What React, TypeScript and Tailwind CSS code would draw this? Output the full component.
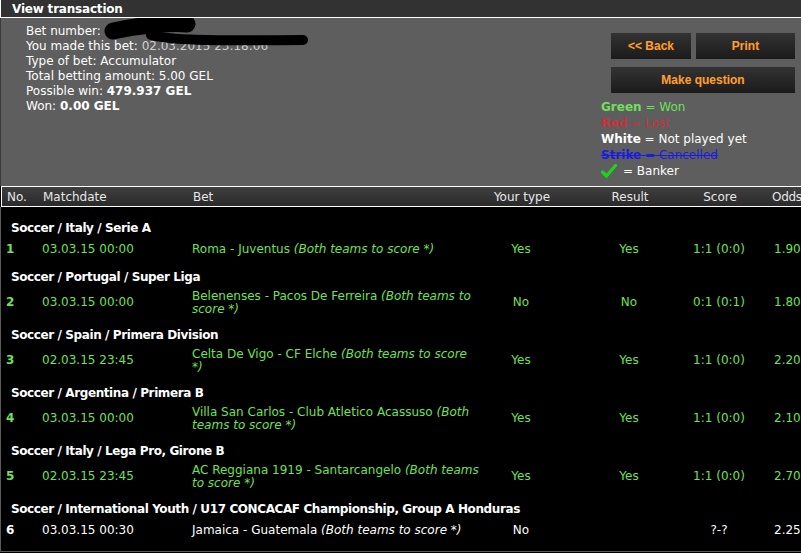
import React from "react";

type Row = {
  group: string;
  no: string;
  date: string;
  betLines: [string, string][];
  type: string;
  result: string;
  score: string;
  odds: string;
  white?: boolean;
};

const rows: Row[] = [
  {
    group: "Soccer / Italy / Serie A",
    no: "1",
    date: "03.03.15 00:00",
    betLines: [["Roma - Juventus ", "(Both teams to score *)"]],
    type: "Yes",
    result: "Yes",
    score: "1:1 (0:0)",
    odds: "1.90",
  },
  {
    group: "Soccer / Portugal / Super Liga",
    no: "2",
    date: "03.03.15 00:00",
    betLines: [
      ["Belenenses - Pacos De Ferreira ", "(Both teams to"],
      ["", "score *)"],
    ],
    type: "No",
    result: "No",
    score: "0:1 (0:1)",
    odds: "1.80",
  },
  {
    group: "Soccer / Spain / Primera Division",
    no: "3",
    date: "02.03.15 23:45",
    betLines: [
      ["Celta De Vigo - CF Elche ", "(Both teams to score"],
      ["", "*)"],
    ],
    type: "Yes",
    result: "Yes",
    score: "1:1 (0:0)",
    odds: "2.20",
  },
  {
    group: "Soccer / Argentina / Primera B",
    no: "4",
    date: "03.03.15 00:00",
    betLines: [
      ["Villa San Carlos - Club Atletico Acassuso ", "(Both"],
      ["", "teams to score *)"],
    ],
    type: "Yes",
    result: "Yes",
    score: "1:1 (0:0)",
    odds: "2.10",
  },
  {
    group: "Soccer / Italy / Lega Pro, Girone B",
    no: "5",
    date: "02.03.15 23:45",
    betLines: [
      ["AC Reggiana 1919 - Santarcangelo ", "(Both teams"],
      ["", "to score *)"],
    ],
    type: "Yes",
    result: "Yes",
    score: "1:1 (0:0)",
    odds: "2.70",
  },
  {
    group:
      "Soccer / International Youth / U17 CONCACAF Championship, Group A Honduras",
    no: "6",
    date: "03.03.15 00:30",
    betLines: [["Jamaica - Guatemala ", "(Both teams to score *)"]],
    type: "No",
    result: "",
    score: "?-?",
    odds: "2.25",
    white: true,
  },
];

const GRID =
  "grid grid-cols-[36px_150px_277px_104px_112px_68px_1fr] pl-[5px]";

function Btn({ children, className }: { children: React.ReactNode; className?: string }) {
  return (
    <div
      className={
        "h-[26px] flex items-center justify-center bg-gradient-to-b from-[#333333] to-[#1b1b1b] text-[#f2a23a] font-bold text-[12px] font-['Liberation_Sans',Arial,sans-serif] [text-shadow:0_0_1px_#7a2a00] " +
        (className ?? "")
      }
    >
      {children}
    </div>
  );
}

export default function App() {
  return (
    <div className="w-[801px] h-[553px] overflow-hidden bg-black font-['DejaVu_Sans',sans-serif] text-[12px]">
      <div className="w-[820px]">
        {/* Title bar */}
        <div className="h-[18px] bg-[#323232] border-l border-b border-white pl-[11px] flex items-center">
          <span className="text-white font-bold text-[12px] leading-none tracking-[-0.2px]">View transaction</span>
        </div>

        {/* Info panel */}
        <div className="relative h-[168px] bg-[#5e5e5e] border-l border-[#3a3a3a] flex">
          <div className="pl-[25px] pt-[6px] text-white leading-[15px] w-[600px] shrink-0">
            <div>Bet number:</div>
            <div className="text-[#cfcfcf]">
              <span className="text-white">You made this bet: </span>02.03.2015 23:18:06
            </div>
            <div>Type of bet: Accumulator</div>
            <div>Total betting amount: 5.00 GEL</div>
            <div>
              Possible win: <span className="font-bold">479.937 GEL</span>
            </div>
            <div>
              Won: <span className="font-bold">0.00 GEL</span>
            </div>
          </div>

          {/* redaction scribble */}
          <svg
            className="absolute left-0 top-0"
            width="320"
            height="40"
            viewBox="0 0 320 40"
          >
            <path
              d="M112 13 C 135 8, 170 4, 186 6"
              stroke="#000"
              strokeWidth="17"
              fill="none"
              strokeLinecap="round"
            />
            <path
              d="M150 17 C 170 22, 200 23, 302 22"
              stroke="#000"
              strokeWidth="10"
              fill="none"
              strokeLinecap="round"
            />
          </svg>

          {/* Right column */}
          <div className="w-[200px] pt-[15px]">
            <div className="pl-[10px] flex gap-[5px] w-[194px]">
              <Btn className="w-[80px]">&lt;&lt; Back</Btn>
              <Btn className="w-[99px]">Print</Btn>
            </div>
            <div className="pl-[10px] mt-[8px] w-[194px]">
              <Btn className="w-[184px]">Make question</Btn>
            </div>
            <div className="mt-[6px] leading-[16px] text-[12px]">
              <div className="text-[#6ee05a]">
                <span className="font-bold">Green</span> = Won
              </div>
              <div className="text-[#c8323a]">
                <span className="font-bold">Red</span> = Lost
              </div>
              <div className="text-white">
                <span className="font-bold">White</span> = Not played yet
              </div>
              <div className="text-[#1c1ce0] line-through">
                <span className="font-bold">Strike</span> = Cancelled
              </div>
              <div className="text-white flex items-center">
                <svg width="16" height="14" viewBox="0 0 16 14" className="mr-[6px]">
                  <path
                    d="M1.5 8 L5.5 12 L14.5 1.5"
                    stroke="#1fd21f"
                    strokeWidth="3.2"
                    fill="none"
                    strokeLinecap="round"
                    strokeLinejoin="round"
                  />
                </svg>
                <span>= Banker</span>
              </div>
            </div>
          </div>
        </div>

        {/* Table header */}
        <div
          className={
            GRID +
            " h-[21px] items-center bg-gradient-to-b from-[#3f3f3f] to-[#2a2a2a] border-t border-b border-l border-white text-[#e6e6e6] ml-[1px]"
          }
        >
          <div>No.</div>
          <div>Matchdate</div>
          <div>Bet</div>
          <div className="text-center">Your type</div>
          <div className="text-center">Result</div>
          <div className="text-center">Score</div>
          <div className="pl-[18px] tracking-[-0.3px]">Odds</div>
        </div>

        {/* Table body */}
        <div className="h-[345px] border-l border-b border-[#5a5a5a] pt-[7px]">
          {rows.map((r) => {
            const color = r.white ? "text-white" : "text-[#6ee05a]";
            const two = r.betLines.length > 1;
            return (
              <div key={r.no}>
                <div className="h-[21px] pt-[7px] pl-[10px] leading-[14px] font-bold text-white whitespace-nowrap tracking-[-0.4px]">
                  {r.group}
                </div>
                <div
                  className={
                    GRID +
                    " items-center leading-[13px] " +
                    color +
                    (two ? " h-[37px]" : " h-[28px]")
                  }
                >
                  <div className="font-bold">{r.no}</div>
                  <div>{r.date}</div>
                  <div className="whitespace-nowrap">
                    {r.betLines.map((l, i) => (
                      <div key={i}>
                        {l[0]}
                        <span className="italic">{l[1]}</span>
                      </div>
                    ))}
                  </div>
                  <div className="text-center">{r.type}</div>
                  <div className="text-center">{r.result}</div>
                  <div className="text-center">{r.score}</div>
                  <div className="pl-[21px]">{r.odds}</div>
                </div>
              </div>
            );
          })}
        </div>
      </div>
    </div>
  );
}
